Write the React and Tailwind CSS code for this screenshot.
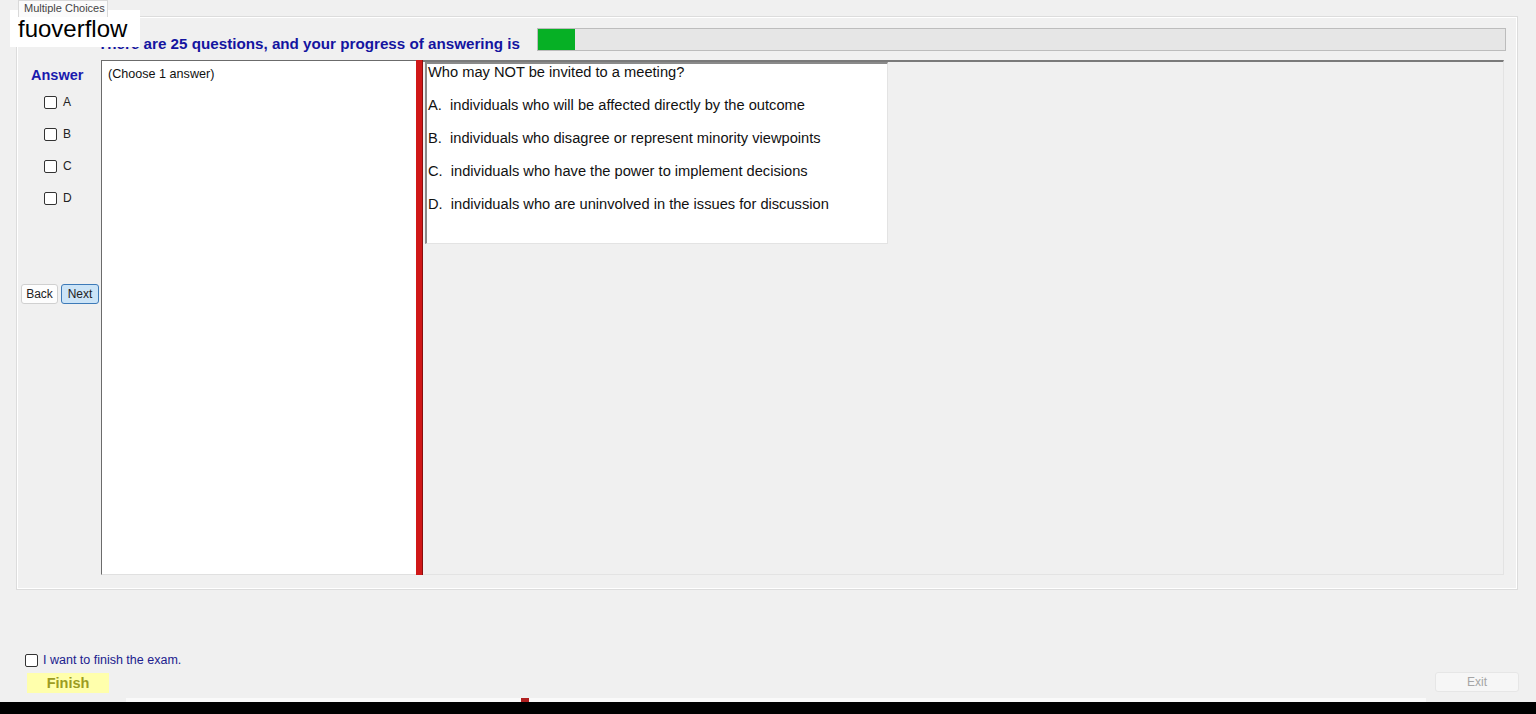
import React from "react"

const font = { fontFamily: "'Liberation Sans', Arial, sans-serif" }

function Box({ label }) {
  return (
    <div className="flex items-center h-[13px] gap-[6px]">
      <div className="w-[13px] h-[13px] rounded-[2px] border border-[#333] bg-white" />
      <span className="text-[12px] leading-[13px] text-[#222]">{label}</span>
    </div>
  )
}

const options = [
  "A.  individuals who will be affected directly by the outcome",
  "B.  individuals who disagree or represent minority viewpoints",
  "C.  individuals who have the power to implement decisions",
  "D.  individuals who are uninvolved in the issues for discussion",
]

export default function App() {
  return (
    <div className="relative w-[1536px] h-[714px] bg-[#f0f0f0] flex flex-col overflow-hidden" style={font}>
      {/* tab strip */}
      <div className="h-[16px] pl-[18px] flex">
        <div className="w-[90px] h-[17px] bg-[#fbfbfb] border border-b-0 border-[#d9d9d9] text-[11px] leading-[14px] pl-[5px] text-[#444] z-10">
          Multiple Choices
        </div>
      </div>

      {/* tab page */}
      <div className="ml-[16px] w-[1502px] h-[574px] border border-[#dcdcdc] flex flex-col">
        <div className="flex-1 flex flex-col border border-white">
          <div className="h-[42px] flex items-start pt-[10px] pl-[80px]">
            <span className="text-[15.2px] leading-[22px] pt-[5px] font-bold text-[#1414a0] whitespace-nowrap">
              There are 25 questions, and your progress of answering is
            </span>
            <div className="ml-[17px] w-[969px] h-[23px] bg-[#e6e6e6] border border-[#bcbcbc] flex">
              <div className="w-[37px] h-full bg-[#06b025]" />
            </div>
          </div>

          <div className="h-[515px] flex">
            {/* answer column */}
            <div className="w-[83px] flex flex-col">
              <div className="pl-[13px] pt-[7px] text-[14.5px] font-bold text-[#1a1aae] leading-[16px]">Answer</div>
              <div className="pl-[26px] pt-[13px] flex flex-col gap-[19px]">
                <Box label="A" />
                <Box label="B" />
                <Box label="C" />
                <Box label="D" />
              </div>
              <div className="pl-[3px] mt-[79px] flex gap-[3px]">
                <button className="w-[37px] h-[20px] bg-[#fdfdfd] border border-[#d0d0d0] rounded-[3px] text-[12px] text-[#222] leading-[18px]">Back</button>
                <button className="w-[38px] h-[20px] bg-[#cce4f7] border border-[#3d7ab8] rounded-[3px] text-[12px] text-[#222] leading-[18px]">Next</button>
              </div>
            </div>

            {/* left panel */}
            <div className="w-[315px] h-[515px] bg-white border-t border-l border-[#6b6b6b] border-b border-b-[#e0e0e0]">
              <div className="pl-[6px] pt-[6px] text-[12.6px] leading-[14px] text-[#111]">(Choose 1 answer)</div>
            </div>

            {/* splitter */}
            <div className="w-[7px] h-[515px] bg-[#d01818] border-r border-[#8a0d0d]" />

            {/* right panel */}
            <div className="w-[1081px] h-[515px] border-t-2 border-[#7a7a7a] border-b border-b-[#e3e3e3] border-r border-r-[#e3e3e3] pl-[2px]">
              <div className="w-[463px] h-[182px] bg-white border-t-2 border-l-2 border-[#8a8a8a] border-r border-b border-r-[#e3e3e3] border-b-[#e3e3e3] pl-[1px] text-[14.67px] text-[#111]">
                <div className="leading-[16px]">Who may NOT be invited to a meeting?</div>
                {options.map((o) => (
                  <div key={o} className="leading-[16px] mt-[17px] whitespace-pre">{o}</div>
                ))}
              </div>
            </div>
          </div>
        </div>
      </div>

      {/* footer */}
      <div className="flex-1 flex flex-col pl-[25px] pt-[63px]">
        <div className="flex items-center gap-[5px] h-[14px]">
          <div className="w-[13px] h-[13px] rounded-[2px] border border-[#333] bg-white" />
          <span className="text-[12.5px] text-[#20208e] leading-[14px]">I want to finish the exam.</span>
        </div>
        <div className="flex items-start justify-between pr-[17px] mt-[6px]">
          <button className="ml-[2px] w-[82px] h-[20px] bg-[#ffffac] text-[14.5px] font-bold text-[#9c9c22] leading-[20px]">Finish</button>
          <button className="w-[84px] h-[20px] bg-[#f6f6f6] border border-[#e6e6e6] rounded-[3px] text-[12px] text-[#a5a5a5] leading-[18px] -mt-[1px]">Exit</button>
        </div>
      </div>
      <div className="h-[4px] flex">
        <div className="ml-[126px] w-[1300px] h-full bg-[#fafafa] flex">
          <div className="ml-[395px] w-[8px] h-full bg-[#b02020]" />
        </div>
      </div>
      <div className="h-[12px] bg-black" />

      {/* watermark overlay */}
      <div className="absolute left-[10px] top-[10px] w-[130px] h-[37px] bg-white text-[24px] leading-[37px] pl-[8px] text-black">
        fuoverflow
      </div>
    </div>
  )
}
